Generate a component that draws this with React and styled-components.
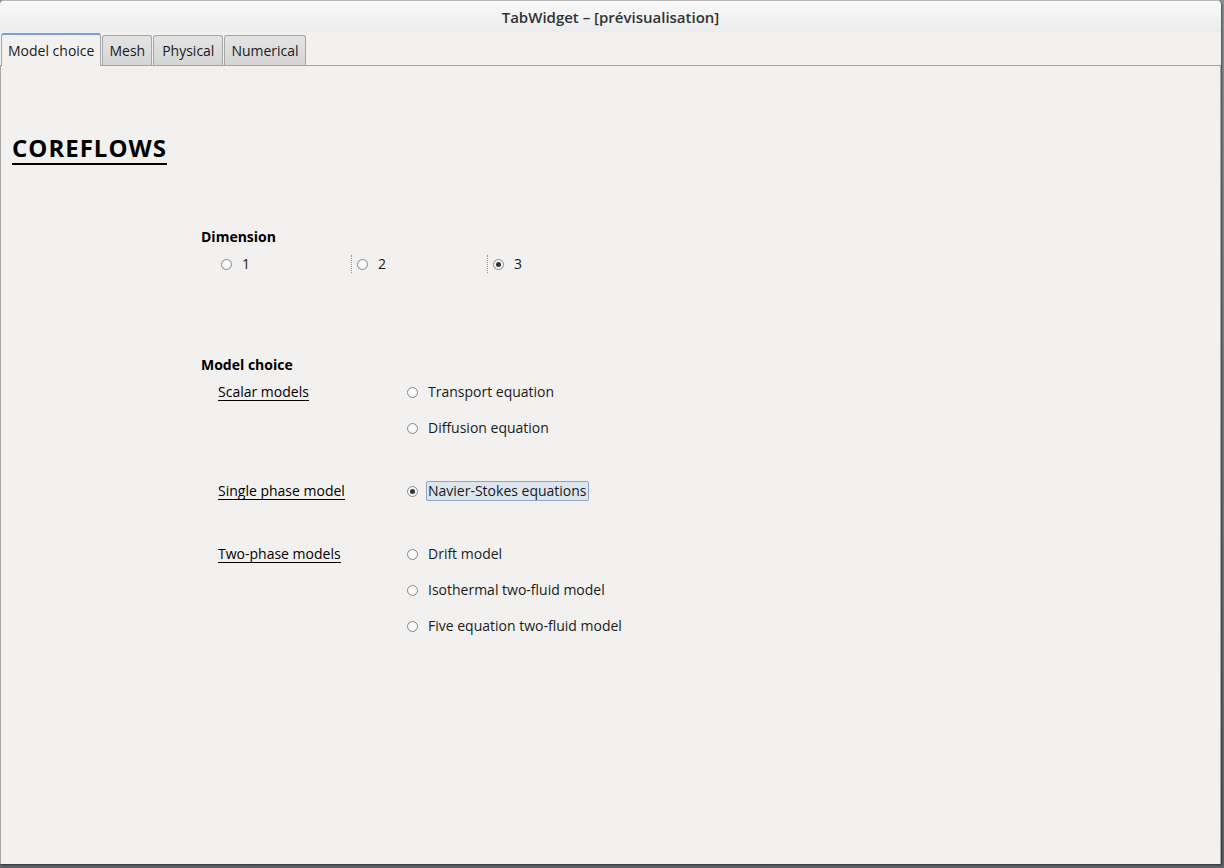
import React from 'react'
import styled, { createGlobalStyle } from 'styled-components'

const GlobalStyle = createGlobalStyle`
  html, body {
    margin: 0;
    padding: 0;
    background: #6f7378;
  }
  body {
    font-family: "Open Sans", "DejaVu Sans", sans-serif;
    font-size: 14px;
    color: #1a1a1a;
  }
`

const Desktop = styled.div`
  width: 1224px;
  height: 868px;
  overflow: hidden;
  background: linear-gradient(#8c9096, #5f6368);
`

const Window = styled.div`
  width: 1221px;
  height: 864px;
  display: flex;
  flex-direction: column;
  background: #f2f1f0;
  border-radius: 5px 5px 0 0;
  box-shadow: 1px 1px 2px rgba(0, 0, 0, 0.5);
  overflow: hidden;
`

const TitleBar = styled.div`
  height: 32px;
  flex: none;
  display: flex;
  align-items: center;
  justify-content: center;
  background: linear-gradient(#f9f9f9, #ececec);
  border-top: 1px solid #b8b8b8;
  box-sizing: border-box;
  font-size: 15px;
  font-weight: 600;
  color: #2e3436;
`

const TabBar = styled.div`
  display: flex;
  align-items: flex-end;
  height: 34px;
  flex: none;
  padding-left: 1px;
  border-bottom: 1px solid #a3a3a3;
  box-sizing: border-box;
`

const Tab = styled.div`
  height: ${p => (p.$active ? '33px' : '30px')};
  box-sizing: border-box;
  padding: 0 ${p => p.$pad || 6}px;
  display: flex;
  align-items: center;
  margin-right: 1px;
  margin-bottom: ${p => (p.$active ? '-1px' : '0')};
  border: 1px solid #a6a6a6;
  border-bottom: none;
  border-top: ${p => (p.$active ? '2px solid #7b9fcf' : '1px solid #a6a6a6')};
  border-radius: 3px 3px 0 0;
  background: ${p => (p.$active ? '#f2f1f0' : 'linear-gradient(#e4e4e4, #d5d5d5)')};
  color: #1a1a1a;
`

const Panel = styled.div`
  flex: 1;
  border-left: 1px solid #a6a6a6;
  border-right: 1px solid #a6a6a6;
  padding: 67px 0 0 11px;
`

const Heading = styled.h1`
  margin: 0;
  display: inline-block;
  font-size: 24px;
  font-weight: 700;
  letter-spacing: 1px;
  line-height: 30px;
  border-bottom: 2px solid #000;
  color: #000;
`

const Form = styled.div`
  margin: 63px 0 0 189px;
  display: flex;
  flex-direction: column;
`

const GroupTitle = styled.div`
  font-weight: 700;
  line-height: 18px;
  color: #000;
`

const DimRow = styled.div`
  display: grid;
  grid-template-columns: 136px 136px 136px;
  margin: 8px 0 0 20px;
  height: 20px;
  align-items: center;
`

const ModelGroup = styled.div`
  margin-top: 82px;
`

const ModelGrid = styled.div`
  display: grid;
  grid-template-columns: 189px auto;
  margin: 8px 0 0 17px;
`

const SubTitle = styled.span`
  align-self: flex-start;
  justify-self: start;
  margin-top: 1px;
  line-height: 17px;
  border-bottom: 1px solid #000;
  color: #000;
`

const Options = styled.div`
  display: flex;
  flex-direction: column;
  gap: 16px;
  margin-bottom: ${p => p.$after}px;
`

const Option = styled.label`
  display: flex;
  align-items: center;
  gap: 8px;
  height: 20px;
  position: relative;
`

const Circle = styled.span`
  width: 11px;
  height: 11px;
  box-sizing: border-box;
  border-radius: 50%;
  border: 1px solid #8a8a8a;
  background: radial-gradient(circle at 50% 40%, #ffffff, #eeeeee);
  display: flex;
  align-items: center;
  justify-content: center;
  flex: none;
  &::after {
    content: '';
    width: 5px;
    height: 5px;
    border-radius: 50%;
    background: ${p => (p.$checked ? '#2e3436' : 'transparent')};
  }
`

const Focus = styled.span`
  position: absolute;
  left: -6px;
  top: 1px;
  height: 18px;
  border-left: 1px dotted #9a9a9a;
`

const Text = styled.span`
  line-height: 18px;
  padding: 0 1px;
  border: 1px solid ${p => (p.$focused ? '#8ea6c6' : 'transparent')};
  border-radius: 2px;
  background: ${p => (p.$focused ? '#dde5ef' : 'transparent')};
`

const Radio = ({ label, checked, focused, dotted }) => (
  <Option>
    {dotted && <Focus />}
    <Circle $checked={checked} />
    <Text $focused={focused}>{label}</Text>
  </Option>
)

const models = [
  { title: 'Scalar models', after: 43, items: ['Transport equation', 'Diffusion equation'] },
  { title: 'Single phase model', after: 43, items: ['Navier-Stokes equations'], checked: 0 },
  { title: 'Two-phase models', after: 0, items: ['Drift model', 'Isothermal two-fluid model', 'Five equation two-fluid model'] },
]

export default function App() {
  return (
    <Desktop>
      <GlobalStyle />
      <Window>
        <TitleBar>TabWidget – [prévisualisation]</TitleBar>
        <TabBar>
          <Tab $active>Model choice</Tab>
          <Tab $pad={6}>Mesh</Tab>
          <Tab $pad={8}>Physical</Tab>
          <Tab $pad={6}>Numerical</Tab>
        </TabBar>
        <Panel>
          <Heading>COREFLOWS</Heading>
          <Form>
            <GroupTitle>Dimension</GroupTitle>
            <DimRow>
              <Radio label="1" />
              <Radio label="2" dotted />
              <Radio label="3" dotted checked />
            </DimRow>
            <ModelGroup>
              <GroupTitle>Model choice</GroupTitle>
              <ModelGrid>
                {models.map(m => (
                  <React.Fragment key={m.title}>
                    <SubTitle>{m.title}</SubTitle>
                    <Options $after={m.after}>
                      {m.items.map((it, i) => (
                        <Radio key={it} label={it} checked={m.checked === i} focused={m.checked === i} />
                      ))}
                    </Options>
                  </React.Fragment>
                ))}
              </ModelGrid>
            </ModelGroup>
          </Form>
        </Panel>
      </Window>
    </Desktop>
  )
}
